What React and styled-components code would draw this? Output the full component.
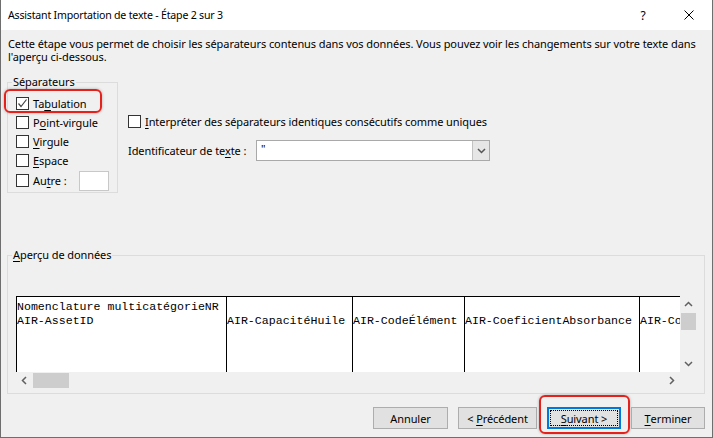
import React from "react";
import styled, { createGlobalStyle } from "styled-components";

const UI_FONT = `"Noto Sans", "Segoe UI", sans-serif`;

const GlobalStyle = createGlobalStyle`
  html, body { margin: 0; padding: 0; background: #f0f0f0; }
  body { font-family: ${UI_FONT}; font-size: 11px; color: #000; }
  *, *::before, *::after { box-sizing: border-box; }
`;

const Window = styled.div`
  width: 713px;
  height: 438px;
  border: 1px solid #6e6e6e;
  border-top: none;
  background: #f0f0f0;
  display: flex;
  flex-direction: column;
  font-family: ${UI_FONT};
  font-size: 11px;
  letter-spacing: -0.08px;
  overflow: hidden;
`;

const TitleBar = styled.div`
  height: 30px;
  flex: none;
  background: #fff;
  display: flex;
  align-items: center;
`;

const Title = styled.div`
  flex: 1;
  padding-left: 7px;
  font-size: 10.6px;
  letter-spacing: -0.2px;
  white-space: nowrap;
`;

const CaptionButton = styled.div`
  width: 46px;
  height: 30px;
  display: flex;
  align-items: center;
  justify-content: center;
  font-size: 12px;
`;

const Body = styled.div`
  flex: 1;
  display: flex;
  flex-direction: column;
  padding: 7px 7px 0 6px;
`;

const Description = styled.p`
  margin: 0 0 0 1px;
  line-height: 13px;
`;

const Middle = styled.div`
  display: flex;
  align-items: flex-start;
  gap: 10px;
  margin-top: 11px;
`;

const Group = styled.fieldset`
  margin: ${(p) => p.$margin || 0};
  min-width: 0;
  width: ${(p) => p.$w}px;
  border: 1px solid #dcdcdc;
  padding: ${(p) => p.$pad};
  display: flex;
  flex-direction: column;
`;

const Legend = styled.legend`
  margin-left: -4px;
  padding: 0 1px;
  line-height: 16px;
`;

const Key = styled.span`
  text-decoration: underline;
  text-underline-offset: 2px;
`;

const CheckRow = styled.label`
  position: relative;
  display: flex;
  align-items: center;
  gap: 4px;
  height: ${(p) => p.$h || 19}px;
  white-space: nowrap;
`;

const Box = styled.span`
  flex: none;
  width: 13px;
  height: 13px;
  border: 1px solid #333;
  background: #fff;
  display: inline-flex;
  align-items: center;
  justify-content: center;
`;

const SmallInput = styled.span`
  margin-left: auto;
  width: 30px;
  height: 20px;
  border: 1px solid #c8c8c8;
  background: #fff;
`;

const Highlight = styled.span`
  position: absolute;
  left: ${(p) => p.$l}px;
  top: ${(p) => p.$t}px;
  width: ${(p) => p.$w}px;
  height: ${(p) => p.$h}px;
  border: 2px solid #e6211b;
  border-radius: 6px;
  box-shadow: 0 0 3px rgba(0, 0, 0, 0.3);
  pointer-events: none;
`;

const Options = styled.div`
  display: flex;
  flex-direction: column;
  margin-top: 38px;
`;

const ComboRow = styled.div`
  display: flex;
  align-items: center;
  height: 21px;
  margin-top: 9px;
`;

const ComboLabel = styled.span`
  width: 128px;
  flex: none;
  white-space: nowrap;
`;

const Combo = styled.div`
  width: 234px;
  height: 21px;
  border: 1px solid #a9a9a9;
  background: #fff;
  display: flex;
`;

const ComboValue = styled.span`
  flex: 1;
  padding-left: 4px;
  line-height: 15px;
`;

const ComboButton = styled.span`
  width: 17px;
  background: #e6e6e6;
  border-left: 1px solid #c2c2c2;
  display: flex;
  align-items: center;
  justify-content: center;
`;

const Viewport = styled.div`
  display: grid;
  grid-template-columns: 664px 17px;
  grid-template-rows: 76px 17px;
`;

const DataArea = styled.div`
  background: #fff;
  overflow: hidden;
  border-top: 1px solid #000;
  display: flex;
`;

const Cell = styled.div`
  flex: none;
  width: ${(p) => p.$w}px;
  border-left: 1px solid #000;
  padding-top: 3px;
  font-family: "Liberation Mono", "Courier New", monospace;
  font-size: 11.6px;
  letter-spacing: 0;
  line-height: 14px;
  white-space: pre;
  overflow: hidden;
`;

const VScroll = styled.div`
  display: flex;
  flex-direction: column;
  align-items: center;
  background: #f0f0f0;
`;

const HScroll = styled.div`
  display: flex;
  align-items: center;
  background: #f0f0f0;
`;

const ArrowBtn = styled.span`
  flex: none;
  width: 17px;
  height: 17px;
  display: flex;
  align-items: center;
  justify-content: center;
`;

const Thumb = styled.span`
  flex: none;
  background: #cdcdcd;
  width: ${(p) => p.$w}px;
  height: ${(p) => p.$h}px;
`;

const Spacer = styled.span`
  flex: 1;
`;

const ButtonRow = styled.div`
  display: flex;
  justify-content: flex-end;
  gap: 10px;
  margin-top: 13px;
`;

const BtnWrap = styled.div`
  position: relative;
`;

const Button = styled.div`
  width: ${(p) => p.$w}px;
  height: 22px;
  background: #e1e1e1;
  border: ${(p) => (p.$focus ? "2px solid #0078d7" : "1px solid #adadad")};
  display: flex;
  align-items: center;
  justify-content: center;
  position: relative;
  white-space: nowrap;
`;

const FocusRing = styled.span`
  position: absolute;
  inset: 1px;
  border: 1px dotted #000;
  pointer-events: none;
`;

const Chevron = ({ dir, color = "#606060" }) => {
  const pts = {
    up: "1,6 4.5,2.5 8,6",
    down: "1,3 4.5,6.5 8,3",
    left: "6,1 2.5,4.5 6,8",
    right: "3,1 6.5,4.5 3,8",
  }[dir];
  return (
    <svg width="9" height="9" viewBox="0 0 9 9">
      <polyline points={pts} fill="none" stroke={color} strokeWidth="1.5" />
    </svg>
  );
};

const CheckMark = () => (
  <svg width="11" height="11" viewBox="0 0 11 11">
    <polyline points="1.5,5.5 4,8.5 9.5,1.5" fill="none" stroke="#444" strokeWidth="1.2" />
  </svg>
);

const Checkbox = ({ checked }) => <Box>{checked && <CheckMark />}</Box>;

const columns = [
  { w: 210, lines: ["Nomenclature multicatégorieNR", "AIR-AssetID"] },
  { w: 126, lines: ["", "AIR-CapacitéHuile"] },
  { w: 112, lines: ["", "AIR-CodeÉlément"] },
  { w: 175, lines: ["", "AIR-CoeficientAbsorbance"] },
  { w: 60, lines: ["", "AIR-Coe"] },
];

export default function App() {
  return (
    <>
      <GlobalStyle />
      <Window>
        <TitleBar>
          <Title>Assistant Importation de texte - Étape 2 sur 3</Title>
          <CaptionButton>?</CaptionButton>
          <CaptionButton>
            <svg width="10" height="10" viewBox="0 0 10 10">
              <path d="M0.5 0.5 L9.5 9.5 M9.5 0.5 L0.5 9.5" stroke="#000" strokeWidth="1" />
            </svg>
          </CaptionButton>
        </TitleBar>
        <Body>
          <Description>
            Cette étape vous permet de choisir les séparateurs contenus dans vos données. Vous pouvez voir les
            changements sur votre texte dans l'aperçu ci-dessous.
          </Description>
          <Middle>
            <Group $w={111} $pad="4px 8px 1px 8px">
              <Legend>Séparateurs</Legend>
              <CheckRow>
                <Checkbox checked />
                <span>
                  Ta<Key>b</Key>ulation
                </span>
                <Highlight $l={-12} $t={-5} $w={98} $h={24} />
              </CheckRow>
              <CheckRow>
                <Checkbox />
                <span>
                  P<Key>o</Key>int-virgule
                </span>
              </CheckRow>
              <CheckRow>
                <Checkbox />
                <span>
                  <Key>V</Key>irgule
                </span>
              </CheckRow>
              <CheckRow>
                <Checkbox />
                <span>
                  <Key>E</Key>space
                </span>
              </CheckRow>
              <CheckRow $h={21}>
                <Checkbox />
                <span>
                  Au<Key>t</Key>re :
                </span>
                <SmallInput />
              </CheckRow>
            </Group>
            <Options>
              <CheckRow>
                <Checkbox />
                <span>
                  <Key>I</Key>nterpréter des séparateurs identiques consécutifs comme uniques
                </span>
              </CheckRow>
              <ComboRow>
                <ComboLabel>
                  Identificateur de te<Key>x</Key>te :
                </ComboLabel>
                <Combo>
                  <ComboValue>"</ComboValue>
                  <ComboButton>
                    <Chevron dir="down" color="#555" />
                  </ComboButton>
                </Combo>
              </ComboRow>
            </Options>
          </Middle>
          <Group $w={698} $pad="33px 7px 4px 8px" $margin="54px 0 0 0">
            <Legend>
              <Key>A</Key>perçu de données
            </Legend>
            <Viewport>
              <DataArea>
                {columns.map((c, i) => (
                  <Cell key={i} $w={c.w}>
                    {c.lines.join("\n")}
                  </Cell>
                ))}
              </DataArea>
              <VScroll>
                <ArrowBtn>
                  <Chevron dir="up" />
                </ArrowBtn>
                <Thumb $w={15} $h={17} />
                <Spacer />
                <ArrowBtn>
                  <Chevron dir="down" />
                </ArrowBtn>
              </VScroll>
              <HScroll>
                <ArrowBtn>
                  <Chevron dir="left" />
                </ArrowBtn>
                <Thumb $w={36} $h={15} />
                <Spacer />
                <ArrowBtn>
                  <Chevron dir="right" />
                </ArrowBtn>
              </HScroll>
            </Viewport>
          </Group>
          <ButtonRow>
            <Button $w={75}>Annuler</Button>
            <Button $w={79}>
              &lt;&nbsp;<Key>P</Key>récédent
            </Button>
            <BtnWrap>
              <Button $w={74} $focus>
                <FocusRing />
                <span>
                  <Key>S</Key>uivant &gt;
                </span>
              </Button>
              <Highlight $l={-8} $t={-12} $w={91} $h={39} />
            </BtnWrap>
            <Button $w={74}>
              <Key>T</Key>erminer
            </Button>
          </ButtonRow>
        </Body>
      </Window>
    </>
  );
}
